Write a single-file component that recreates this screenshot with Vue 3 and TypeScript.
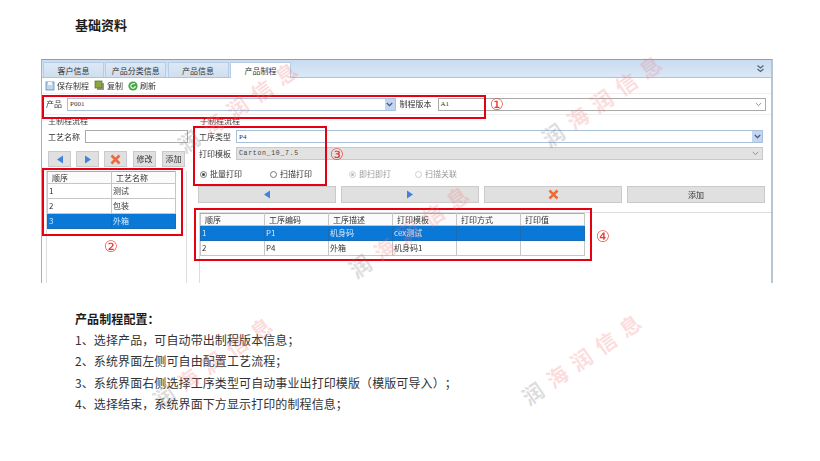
<script setup lang="ts">
interface Mark { x: number; y: number }
const marks: Mark[] = [
  { x: 237, y: 107 },
  { x: 601, y: 100 },
  { x: 408, y: 231 },
  { x: 581, y: 359 },
  { x: 212, y: 362 },
]
const tabs = ['客户信息', '产品分类信息', '产品信息', '产品制程']
const leftRows = [
  ['1', '测试'],
  ['2', '包装'],
  ['3', '外箱'],
]
const rightHead = ['顺序', '工序编码', '工序描述', '打印模板', '打印方式', '打印值']
const rightRows = [
  ['1', 'P1', '机身码', 'cex测试', '', ''],
  ['2', 'P4', '外箱', '机身码1', '', ''],
]
const notes = [
  '1、选择产品，可自动带出制程版本信息；',
  '2、系统界面左侧可自由配置工艺流程；',
  '3、系统界面右侧选择工序类型可自动事业出打印模版（模版可导入）；',
  '4、选择结束，系统界面下方显示打印的制程信息；',
]
</script>

<template>
  <div class="page">
    <h1 class="title">基础资料</h1>

    <section class="win">
      <div class="tabbar">
        <span v-for="(t, i) in tabs" :key="t" class="tab" :class="{ on: i === 3 }">{{ t }}</span>
        <svg class="collapse" width="9" height="9" viewBox="0 0 9 9" fill="none" stroke="#47617f" stroke-width="1.1">
          <path d="M1.5 1.5 4.5 4 7.5 1.5M1.5 5 4.5 7.5 7.5 5" />
        </svg>
      </div>

      <div class="toolbar">
        <span class="tool">
          <svg width="10" height="10" viewBox="0 0 10 10"><rect x="1" y="1" width="8" height="8" fill="#bcd6ee" stroke="#5f8bb5" stroke-width=".8" /><rect x="3" y="1" width="4" height="3" fill="#f4f7fa" /></svg>
          保存制程
        </span>
        <span class="tool">
          <svg width="11" height="11" viewBox="0 0 11 11"><rect x="3" y="3" width="7" height="7" fill="#9a9a8c" /><rect x="1" y="1" width="7" height="7" fill="#8aa83c" stroke="#55702a" stroke-width=".7" /></svg>
          复制
        </span>
        <span class="tool">
          <svg width="10" height="10" viewBox="0 0 10 10"><circle cx="5" cy="5" r="4.6" fill="#41a744" /><path d="M7.2 5A2.2 2.2 0 1 1 5 2.8H7" fill="none" stroke="#fff" stroke-width="1.1" /></svg>
          刷新
        </span>
      </div>

      <div class="prodrow">
        <label class="lbl">产品</label>
        <span class="input blue grow mono">P001
          <span class="drop"><svg width="7" height="5" viewBox="0 0 7 5" fill="none" stroke="#3c5a88" stroke-width="1.3"><path d="M.8 1 3.5 3.6 6.2 1" /></svg></span>
        </span>
        <label class="lbl ver">制程版本</label>
        <span class="input grey grow mono">A1
          <svg class="caret" width="7" height="5" viewBox="0 0 7 5" fill="none" stroke="#888" stroke-width=".9"><path d="M.8 1 3.5 3.6 6.2 1" /></svg>
        </span>
      </div>

      <div class="split">
        <div class="left">
          <div class="legend">主制程流程</div>
          <div class="field name">
            <label class="lbl">工艺名称</label>
            <span class="input grey grow"></span>
          </div>
          <div class="btns">
            <button class="btn sq"><svg width="8" height="9" viewBox="0 0 8 9"><path d="M7 .5V8.5L1 4.5Z" fill="#3f83dc" /></svg></button>
            <button class="btn sq"><svg width="8" height="9" viewBox="0 0 8 9"><path d="M1 .5V8.5L7 4.5Z" fill="#3f83dc" /></svg></button>
            <button class="btn sq"><svg width="11" height="11" viewBox="0 0 11 11" stroke="#ee6a3a" stroke-width="2.6"><path d="M1.5 1.5 9.5 9.5M9.5 1.5 1.5 9.5" /></svg></button>
            <button class="btn txt">修改</button>
            <button class="btn txt">添加</button>
          </div>
          <div class="listbox">
            <table class="grid lt">
              <thead><tr><th>顺序</th><th>工艺名称</th></tr></thead>
              <tbody>
                <tr v-for="(r, i) in leftRows" :key="r[0]" :class="{ sel: i === 2 }">
                  <td v-for="c in r" :key="c">{{ c }}</td>
                </tr>
              </tbody>
            </table>
          </div>
        </div>

        <div class="right">
          <div class="legend">子制程流程</div>
          <div class="field">
            <label class="lbl">工序类型</label>
            <span class="input blue grow mono">P4
              <span class="drop"><svg width="7" height="5" viewBox="0 0 7 5" fill="none" stroke="#3c5a88" stroke-width="1.3"><path d="M.8 1 3.5 3.6 6.2 1" /></svg></span>
            </span>
          </div>
          <div class="field">
            <label class="lbl">打印模板</label>
            <span class="input dis grow mono wide">Carton_10_7.5
              <svg class="caret" width="7" height="5" viewBox="0 0 7 5" fill="none" stroke="#888" stroke-width=".9"><path d="M.8 1 3.5 3.6 6.2 1" /></svg>
            </span>
          </div>
          <div class="radios">
            <span class="radio r1"><i class="dot checked"></i>批量打印</span>
            <span class="radio r2"><i class="dot"></i>扫描打印</span>
            <span class="radio r3 off"><i class="dot checked"></i>即扫即打</span>
            <span class="radio off"><i class="dot"></i>扫描关联</span>
          </div>
          <div class="bigbtns">
            <button class="btn big"><svg width="8" height="9" viewBox="0 0 8 9"><path d="M7 .5V8.5L1 4.5Z" fill="#3f83dc" /></svg></button>
            <button class="btn big"><svg width="8" height="9" viewBox="0 0 8 9"><path d="M1 .5V8.5L7 4.5Z" fill="#3f83dc" /></svg></button>
            <button class="btn big"><svg width="11" height="11" viewBox="0 0 11 11" stroke="#ee6a3a" stroke-width="2.6"><path d="M1.5 1.5 9.5 9.5M9.5 1.5 1.5 9.5" /></svg></button>
            <button class="btn big">添加</button>
          </div>
          <div class="listbox rb">
            <table class="grid rt">
              <thead><tr><th v-for="h in rightHead" :key="h">{{ h }}</th></tr></thead>
              <tbody>
                <tr v-for="(r, i) in rightRows" :key="r[0]" :class="{ sel: i === 0 }">
                  <td v-for="(c, j) in r" :key="j">{{ c }}</td>
                </tr>
              </tbody>
            </table>
          </div>
        </div>
      </div>
    </section>

    <section class="notes">
      <h2 class="notes-h">产品制程配置：</h2>
      <p v-for="n in notes" :key="n">{{ n }}</p>
    </section>

    <!-- red annotations drawn over the screenshot -->
    <div class="box b1"></div>
    <div class="box b2"></div>
    <div class="box b3"></div>
    <div class="box b4"></div>
    <span class="num n1">①</span>
    <span class="num n2">②</span>
    <span class="num n3">③</span>
    <span class="num n4">④</span>

    <div v-for="(m, i) in marks" :key="i" class="mark" :style="{ left: m.x + 'px', top: m.y + 'px' }">
      <span class="mg">润</span>海润信息
    </div>
  </div>
</template>

<style>
html, body { margin: 0; background: #fff; }
</style>

<style scoped>
.page {
  position: relative;
  width: 820px;
  height: 461px;
  overflow: hidden;
  background: #fff;
  font-family: "Noto Sans CJK SC", "Liberation Sans", sans-serif;
  color: #222;
}
.title {
  margin: 0;
  padding: 16px 0 0 75px;
  height: 59px;
  box-sizing: border-box;
  font-size: 13px;
  line-height: 18px;
  font-weight: 700;
  color: #1c1c1c;
}
.win {
  margin-left: 41px;
  width: 732px;
  height: 224px;
  box-sizing: border-box;
  border-top: 1px solid #8f9fb2;
  border-left: 1px solid #9db3cd;
  border-right: 2px solid #b9c4d2;
  font-size: 8px;
  line-height: 10px;
  color: #333;
  overflow: hidden;
  filter: blur(.25px);
}
.tabbar {
  display: flex;
  align-items: flex-end;
  gap: 1.3px;
  height: 17px;
  padding-left: 1px;
  background: linear-gradient(#c9dcf0, #dbe8f6);
  border-bottom: 1px solid #a9c3e0;
  position: relative;
}
.tab {
  width: 61px;
  height: 15px;
  line-height: 15px;
  text-align: center;
  background: linear-gradient(#dce8f5, #cfdff0);
  border: 1px solid #b7cde6;
  border-bottom: 0;
  box-sizing: border-box;
}
.tab.on { background: #fff; margin-bottom: -1px; height: 16px; }
.collapse { position: absolute; right: 6px; top: 4px; }
.toolbar {
  display: flex;
  align-items: center;
  gap: 5px;
  height: 15px;
  padding-left: 3px;
}
.tool { display: flex; align-items: center; gap: 2px; }
.prodrow {
  display: flex;
  align-items: center;
  height: 22px;
  padding: 0 5px 0 4px;
  border-top: 1px solid #f0f0f0;
  border-bottom: 1px solid #eee;
  box-sizing: border-box;
}
.lbl { flex: none; white-space: nowrap; }
.prodrow .lbl { margin-right: 5px; }
.prodrow .ver { margin: 0 6px 0 4px; width: 32px; }
.input {
  display: flex;
  align-items: center;
  height: 13px;
  box-sizing: border-box;
  padding-left: 2px;
  background: #fff;
  position: relative;
  font-size: 7px;
}
.grow { flex: 1; min-width: 0; }
.mono { font-family: "Liberation Serif", serif; }
.wide { letter-spacing: .7px; font-family: "Liberation Mono", monospace; font-size: 6.5px; }
.input.blue { border: 1px solid #a9c0dc; }
.input.grey { border: 1px solid #aaa; }
.input.dis { border: 1px solid #c9c9c9; background: #e2e2e2; color: #444; }
.drop {
  position: absolute;
  right: 0;
  top: 0;
  bottom: 0;
  width: 10px;
  background: #c4d5ee;
  display: flex;
  align-items: center;
  justify-content: center;
}
.caret { position: absolute; right: 3px; top: 3px; }
.split { display: flex; height: 168px; }
.left {
  width: 146px;
  flex: none;
  padding: 1px 0 0 4px;
  box-sizing: border-box;
}
.right { flex: 1; padding-left: 10px; padding-top: 1px; min-width: 0; }
.legend { height: 12px; line-height: 9px; padding-left: 2px; color: #444; }
.field {
  display: flex;
  align-items: center;
  gap: 3px;
  height: 17px;
  padding-right: 8px;
}
.field .lbl { width: 35px; padding-left: 1px; box-sizing: border-box; }
.name { padding: 0 0 0 2px; }
.name .lbl { width: 34px; padding: 0; }
.btns { display: flex; gap: 5px; margin-top: 6px; padding-left: 2px; }
.btn {
  display: flex;
  align-items: center;
  justify-content: center;
  padding: 0;
  font: inherit;
  color: #333;
  background: #e0e0e0;
  border: 1px solid #cacaca;
  box-sizing: border-box;
}
.sq { width: 23px; height: 16px; }
.txt { width: 23px; height: 16px; margin-left: 1px; }
.listbox {
  margin: 4px 0 0 0;
  width: 141px;
  height: 112px;
  box-sizing: border-box;
  border-left: 1px solid #ddd;
  border-right: 1px solid #ddd;
}
.grid { border-collapse: collapse; table-layout: fixed; background: #fff; }
.lt { width: 129px; }
.grid th {
  height: 11px;
  padding: 0 0 0 4px;
  font-weight: 400;
  text-align: left;
  border: 1px solid #c6c6c6;
  border-top-color: #aaa;
  background: #fbfbfb;
}
.grid td {
  height: 14px;
  padding: 0 0 0 1px;
  border: 1px solid #c6c6c6;
  font-size: 8px;
}
.grid tr.sel td { background: #0a78d7; color: #d8ebfb; border-color: #1a6cb5; }
.radios { display: flex; align-items: center; height: 24px; padding-left: 2px; }
.radio { display: flex; align-items: center; gap: 3px; }
.r1 { width: 70px; }
.r2 { width: 79px; }
.r3 { width: 66px; }
.off { color: #9a9a9a; }
.dot {
  width: 7px;
  height: 7px;
  box-sizing: border-box;
  border: 1px solid #777;
  border-radius: 50%;
  background: #fff;
  position: relative;
}
.off .dot { border-color: #ccc; }
.dot.checked::after {
  content: "";
  position: absolute;
  inset: 1px;
  border-radius: 50%;
  background: #444;
}
.off .dot.checked::after { background: #bbb; }
.bigbtns { display: flex; gap: 5px; padding-right: 6px; height: 17px; }
.big { flex: 1; height: 17px; }
.rb {
  margin: 9px 0 0 1px;
  width: auto;
  height: 71px;
  border-right: 0;
  border-top: 1px solid #ddd;
}
.rt { width: 385px; }
.notes { padding: 26px 0 0 75px; font-size: 12px; color: #333; text-spacing-trim: space-all; letter-spacing: .1px; }
.notes-h { margin: 0; font-size: 12px; line-height: 20px; font-weight: 700; color: #1c1c1c; }
.notes p { margin: 0; line-height: 21.4px; }

.box { position: absolute; border: 2px solid #e60012; box-sizing: border-box; }
.b1 { left: 42px; top: 95px; width: 444px; height: 24px; }
.b2 { left: 42px; top: 168px; width: 141px; height: 68px; }
.b3 { left: 193px; top: 126px; width: 134px; height: 60px; }
.b4 { left: 194px; top: 208px; width: 398px; height: 53px; }
.num {
  position: absolute;
  font-size: 16px;
  line-height: 16px;
  color: #e8392e;
  transform: translate(-50%, -50%);
  font-family: "DejaVu Sans", "Noto Sans CJK SC", sans-serif;
}
.n1 { left: 497px; top: 105px; }
.n2 { left: 111px; top: 247px; }
.n3 { left: 337px; top: 155px; }
.n4 { left: 603px; top: 237px; }

.mark {
  position: absolute;
  transform: translate(-50%, -50%) rotate(-35deg);
  white-space: nowrap;
  font-size: 21px;
  line-height: 24px;
  font-weight: 700;
  letter-spacing: 8.6px;
  padding-left: 8.6px;
  color: rgba(240, 120, 120, .26);
  pointer-events: none;
}
.mg { color: rgba(120, 120, 120, .26); }
</style>
